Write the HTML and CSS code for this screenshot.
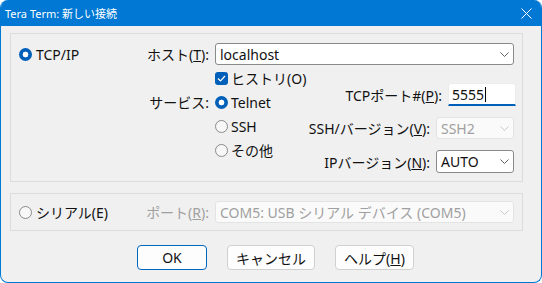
FILE: index.html
```html
<!DOCTYPE html>
<html lang="ja">
<head>
    <meta charset="UTF-8">
    <title>Tera Term: 新しい接続</title>
    <link rel="stylesheet" href="styles.css">
</head>
<body>
<div class="window">
    <div class="titlebar">
        <span class="title">Tera Term: 新しい接続</span>
        <svg class="close" width="11" height="11" viewBox="0 0 11 11"><path d="M0.5 0.5 L10.5 10.5 M10.5 0.5 L0.5 10.5" stroke="#fff" stroke-width="1"/></svg>
    </div>

    <div class="dialog">
        <div class="group tcp-group">
            <div class="side tcp-side">
                <span class="radio on"></span><span>TCP/IP</span>
            </div>
            <div class="tcp-fields">
                <div class="host-row">
                    <span class="lbl">ホスト(<u>T</u>):</span>
                    <div class="combo host">
                        <span>localhost</span>
                        <svg class="chev" width="9" height="5" viewBox="0 0 9 5"><path d="M0.5 0.5 L4.5 4.5 L8.5 0.5" fill="none" stroke="#606060"/></svg>
                    </div>
                </div>
                <div class="lower">
                    <div class="service">
                        <span></span>
                        <span class="opt"><span class="check"><svg width="9" height="7" viewBox="0 0 9 7"><path d="M1 3.5 L3.5 6 L8 1" fill="none" stroke="#fff" stroke-width="1.2"/></svg></span>ヒストリ(O)</span>
                        <span class="lbl">サービス:</span>
                        <span class="opt"><span class="radio on"></span>Telnet</span>
                        <span></span>
                        <span class="opt"><span class="radio"></span>SSH</span>
                        <span></span>
                        <span class="opt"><span class="radio"></span>その他</span>
                    </div>
                    <div class="conn-opts">
                        <div class="opt-row">
                            <span>TCPポート#(<u>P</u>):</span>
                            <div class="textbox">5555<span class="caret"></span></div>
                        </div>
                        <div class="opt-row">
                            <span>SSH/バージョン(<u>V</u>):</span>
                            <div class="combo small disabled ssh">
                                <span>SSH2</span>
                                <svg class="chev" width="9" height="5" viewBox="0 0 9 5"><path d="M0.5 0.5 L4.5 4.5 L8.5 0.5" fill="none" stroke="#c8c8c8"/></svg>
                            </div>
                        </div>
                        <div class="opt-row">
                            <span>IPバージョン(<u>N</u>):</span>
                            <div class="combo small ip">
                                <span>AUTO</span>
                                <svg class="chev" width="9" height="5" viewBox="0 0 9 5"><path d="M0.5 0.5 L4.5 4.5 L8.5 0.5" fill="none" stroke="#606060"/></svg>
                            </div>
                        </div>
                    </div>
                </div>
            </div>
        </div>

        <div class="group serial-group">
            <div class="side">
                <span class="radio"></span><span>シリアル(E)</span>
            </div>
            <span class="lbl dim">ポート(<u>R</u>):</span>
            <div class="combo disabled serial">
                <span>COM5: USB シリアル デバイス (COM5)</span>
                <svg class="chev" width="9" height="5" viewBox="0 0 9 5"><path d="M0.5 0.5 L4.5 4.5 L8.5 0.5" fill="none" stroke="#c8c8c8"/></svg>
            </div>
        </div>

        <div class="buttons">
            <button class="btn default ok">OK</button>
            <button class="btn cancel">キャンセル</button>
            <button class="btn help">ヘルプ(<u>H</u>)</button>
        </div>
    </div>
</div>
</body>
</html>
```

FILE: styles.css
```css
body {
    margin: 0;
    background: #fff;
    font-family: "Noto Sans", "Noto Sans CJK JP", sans-serif;
    font-size: 14px;
    color: #111;
}
.window {
    width: 542px;
    height: 283px;
    box-sizing: border-box;
    background: #f0f0f0;
    border: 1px solid #0078d4;
    border-top: none;
    border-radius: 8px;
    overflow: hidden;
}
.titlebar {
    height: 26px;
    background: #0078d4;
    color: #fff;
    display: flex;
    align-items: center;
    justify-content: space-between;
    padding: 0 9px 0 4px;
    font-size: 11px;
}
.dialog {
    padding: 7px 0 0 9px;
}
.group {
    width: 513px;
    box-sizing: border-box;
    border: 1px solid #dcdcdc;
    display: flex;
}
.tcp-group {
    height: 149px;
}
.side {
    width: 129px;
    box-sizing: border-box;
    padding-left: 8px;
    display: flex;
    align-items: center;
    gap: 4px;
}
.tcp-side {
    align-self: flex-start;
    height: 22px;
    margin-top: 9px;
}
.tcp-fields {
    flex: 1;
    padding: 9px 8px 0 0;
}
.host-row {
    display: flex;
    align-items: center;
    height: 22px;
}
.lbl {
    width: 69px;
    margin-right: 6px;
    text-align: right;
    white-space: nowrap;
}
.service .lbl {
    margin-right: 0;
}
.dim {
    color: #a0a0a0;
}
.combo {
    height: 22px;
    box-sizing: border-box;
    border: 1px solid #8a8a8a;
    border-radius: 3px;
    background: #fff;
    display: flex;
    align-items: center;
    justify-content: space-between;
    padding: 0 4px 0 4px;
    white-space: nowrap;
}
.combo.host {
    flex: 1;
}
.combo.small {
    width: 78px;
}
.combo.ip {
    height: 23px;
}
.combo.disabled {
    background: #fafafa;
    border-color: #e3e3e3;
    color: #a0a0a0;
}
.combo.serial {
    flex: 1;
    margin-right: 8px;
}
.lower {
    display: flex;
    justify-content: space-between;
}
.service {
    display: grid;
    grid-template-columns: 69px auto;
    column-gap: 6px;
    grid-auto-rows: 24px;
    align-items: center;
    margin-top: 1px;
}
.opt {
    display: flex;
    align-items: center;
    gap: 3px;
    white-space: nowrap;
}
.radio {
    width: 13px;
    height: 13px;
    box-sizing: border-box;
    border-radius: 50%;
    border: 1px solid #8a8a8a;
    background: #f7f7f7;
    flex: none;
}
.radio.on {
    border: none;
    background: radial-gradient(circle, #fff 0 2.6px, #005fb8 3.2px);
}
.check {
    width: 13px;
    height: 13px;
    border-radius: 3px;
    background: #005fb8;
    display: flex;
    align-items: center;
    justify-content: center;
    flex: none;
}
.conn-opts {
    margin-top: 18px;
    display: flex;
    flex-direction: column;
    align-items: flex-end;
    gap: 11px;
}
.opt-row {
    display: flex;
    align-items: center;
    gap: 6px;
    white-space: nowrap;
}
.textbox {
    width: 68px;
    height: 23px;
    margin-right: -2px;
    box-sizing: border-box;
    background: #fff;
    border: 1px solid #ececec;
    border-bottom: 2px solid #005fb8;
    border-radius: 3px 3px 0 0;
    padding-left: 3px;
    display: flex;
    align-items: center;
}
.caret {
    width: 1px;
    height: 15px;
    background: #000;
    margin-left: 1px;
}
.serial-group {
    height: 38px;
    margin-top: 11px;
    align-items: center;
}
.serial-group .side {
    height: 100%;
}
.buttons {
    display: flex;
    gap: 20px;
    margin: 14px 0 0 127px;
}
.btn {
    height: 25px;
    box-sizing: border-box;
    border: 1px solid #d0d0d0;
    border-radius: 4px;
    background: #fdfdfd;
    font-family: inherit;
    font-size: 14px;
    color: #111;
    padding: 0;
}
.btn.default {
    border-color: #0067c0;
}
.ok {
    width: 70px;
}
.cancel {
    width: 88px;
}
.help {
    width: 79px;
}
```
